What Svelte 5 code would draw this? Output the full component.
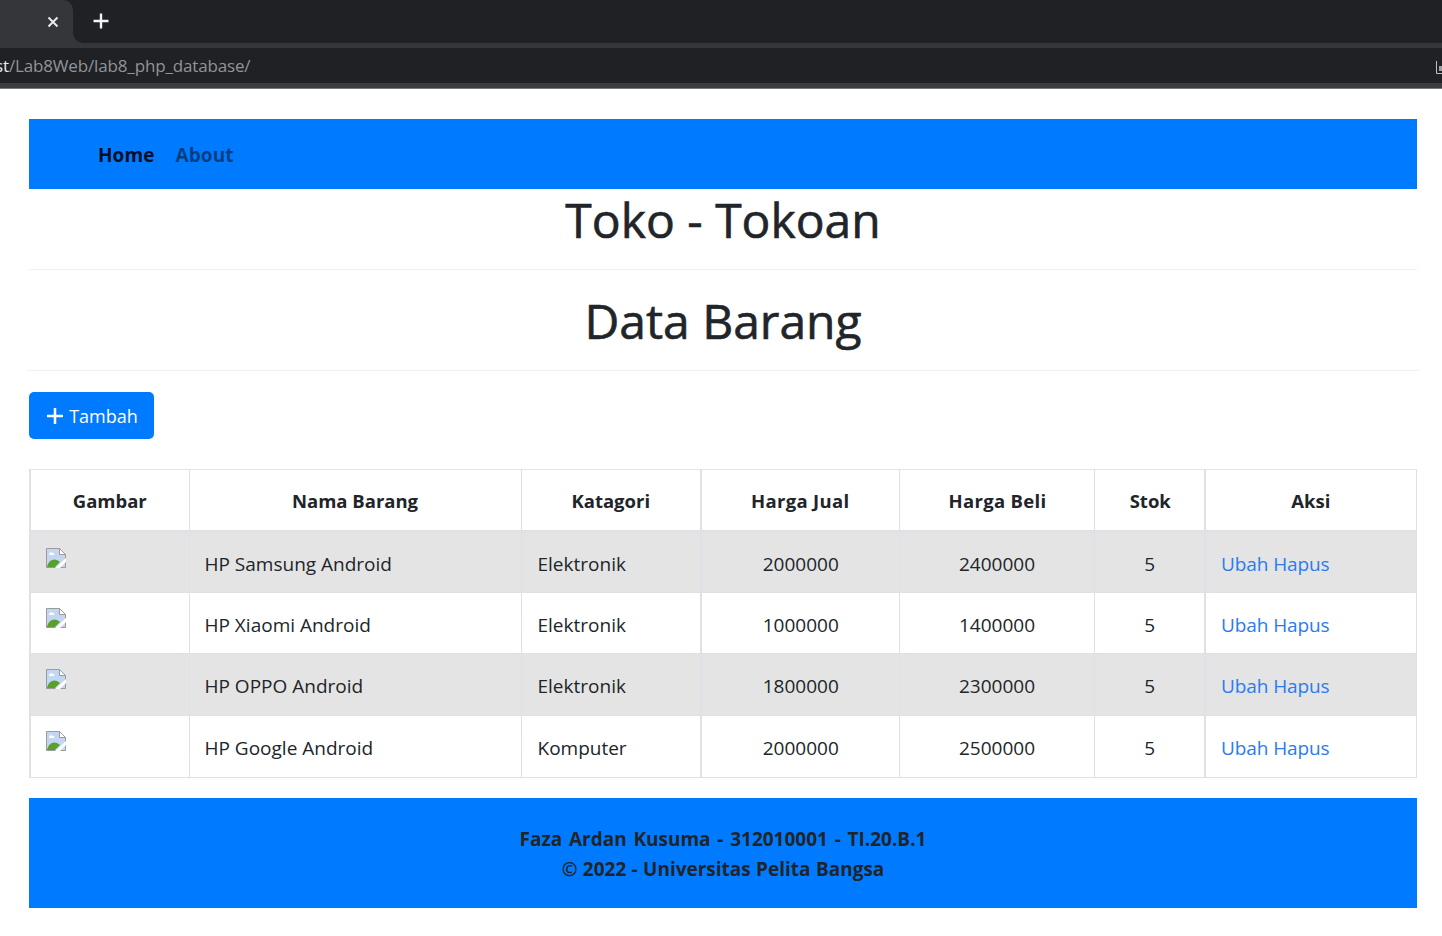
<script>
  const rows = [
    { name: 'HP Samsung Android', cat: 'Elektronik', jual: 2000000, beli: 2400000, stok: 5 },
    { name: 'HP Xiaomi Android', cat: 'Elektronik', jual: 1000000, beli: 1400000, stok: 5 },
    { name: 'HP OPPO Android', cat: 'Elektronik', jual: 1800000, beli: 2300000, stok: 5 },
    { name: 'HP Google Android', cat: 'Komputer', jual: 2000000, beli: 2500000, stok: 5 }
  ];
</script>

<div class="chrome">
  <div class="tabs">
    <div class="tab">
      <svg class="x" width="12" height="12" viewBox="0 0 12 12"><path d="M1.500 1.500l9 9M10.500 1.500l-9 9" stroke="#e8eaed" stroke-width="2" /></svg>
    </div>
    <svg class="plus" width="16" height="16" viewBox="0 0 16 16"><path d="M8 .5v15M.5 8h15" stroke="#f1f3f4" stroke-width="2.400" /></svg>
  </div>
  <div class="urlbar">
    <span class="url"><b>st</b>/Lab8Web/lab8_php_database/</span>
    <svg class="corner" width="6" height="13" viewBox="0 0 6 13"><path d="M.5 0v12.500H6" fill="none" stroke="#bdc1c6" /><path d="M3 5h3v5H3z" fill="#9aa0a6" /></svg>
  </div>
</div>

<div class="page">
  <nav class="navbar">
    <a class="active" href="#home">Home</a>
    <a href="#about">About</a>
  </nav>

  <h1>Toko - Tokoan</h1>
  <hr />
  <h1>Data Barang</h1>
  <hr class="wide" />

  <button class="btn">
    <svg width="18" height="18" viewBox="0 0 18 18"><path d="M9 1v16M1 9h16" stroke="#fff" stroke-width="2.500" /></svg>
    <span>Tambah</span>
  </button>

  <table>
    <colgroup>
      <col class="c1" /><col class="c2" /><col class="c3" /><col class="c4" /><col class="c5" /><col class="c6" /><col class="c7" />
    </colgroup>
    <thead>
      <tr>
        <th>Gambar</th><th>Nama Barang</th><th>Katagori</th><th>Harga Jual</th><th>Harga Beli</th><th>Stok</th><th>Aksi</th>
      </tr>
    </thead>
    <tbody>
      {#each rows as r, i}
        <tr class:tall={i > 1} class:top={i === 0}>
          <td class="img">
            <svg width="20" height="20" viewBox="0 0 20 20">
              <path d="M.5.5h13l6 6v13H.5z" fill="#c3d6f2" stroke="#9b9b9b" />
              <path d="M13.500.5v6h6z" fill="#fff" stroke="#9b9b9b" />
              <path d="M1 19c1-6 6-9 10-7l3 2-5 5z" fill="#5aa02c" />
              <path d="M3 6c1-2 3-2 4-1 2 0 2 2 0 2H4C3 7 3 6.500 3 6z" fill="#fff" />
              <path d="M9 20l11-10v4l-6 6z" fill="#fff" />
            </svg>
          </td>
          <td>{r.name}</td>
          <td class="cat">{r.cat}</td>
          <td class="c">{r.jual}</td>
          <td class="c">{r.beli}</td>
          <td class="c">{r.stok}</td>
          <td class="act"><a href="#ubah">Ubah</a> <a href="#hapus">Hapus</a></td>
        </tr>
      {/each}
    </tbody>
  </table>

  <footer>
    <p class="l1">Faza Ardan Kusuma - 312010001 - TI.20.B.1</p>
    <p class="l2">© 2022 - Universitas Pelita Bangsa</p>
  </footer>
</div>

<style>
  :global(body) {
    margin: 0;
    background: #fff;
    font-family: "Open Sans", "Noto Sans", sans-serif;
    color: #212529;
    font-size: 19px;
    line-height: 30px;
  }
  .chrome { height: 89px; background: #202124; border-bottom: 1px solid #77787a; box-sizing: border-box; }
  .tabs { height: 48px; box-sizing: border-box; display: flex; align-items: flex-start; border-bottom: 5px solid #35363a; }
  .tab { width: 73px; height: 43px; background: #35363a; border-top-right-radius: 10px; display: flex; align-items: center; justify-content: flex-end; padding-right: 14px; box-sizing: border-box; position: relative; }
  .tab::after { content: ""; position: absolute; left: 100%; bottom: 0; width: 10px; height: 10px; background: radial-gradient(circle at 100% 0, transparent 9.500px, #35363a 10px); }
  .plus { margin-left: 20px; margin-top: 13px; }
  .urlbar { height: 40px; box-sizing: border-box; border-bottom: 5px solid #3b3c40; position: relative; overflow: hidden; }
  .url { display: block; margin-left: -5px; font-size: 17px; letter-spacing: -.15px; line-height: 35px; color: #8f959a; white-space: nowrap; }
  .url b { color: #e8eaed; font-weight: 400; }
  .corner { position: absolute; right: 0; top: 13px; }

  .page { padding: 30px 25px 28px 29px; }
  .navbar { height: 70px; background: #007bff; display: flex; align-items: center; gap: 21px; padding: 2px 0 0 69px; box-sizing: border-box; font-weight: 700; letter-spacing: .08px; }
  .navbar a { color: rgba(0, 0, 0, .5); text-decoration: none; }
  .navbar a.active { color: rgba(0, 0, 0, .9); }

  h1 { margin: 0; text-align: center; font-size: 48px; font-weight: 400; -webkit-text-stroke: .6px #212529; line-height: 60px; padding-top: 1px; height: 61px; box-sizing: border-box; }
  hr { border: 0; border-top: 1px solid rgba(0, 0, 0, .05); margin: 19px 0 20px; }
  hr.wide { margin: 19px -3px 21px; }

  .btn { height: 47px; width: 125px; background: #007bff; color: #fff; border: 0; border-radius: 5px; font: inherit; display: flex; align-items: center; justify-content: center; gap: 5px; padding: 0 0 0 1px; }
  .btn span { font-size: 18px; }
  table { margin-top: 30px; width: 1386px; table-layout: fixed; border-collapse: collapse; }
  .c1 { width: 159px; } .c2 { width: 332px; } .c3 { width: 180px; } .c4 { width: 198px; } .c5 { width: 195px; } .c6 { width: 111px; } .c7 { width: 211px; }
  th, td { border: 1px solid #dee2e6; vertical-align: top; text-align: left; white-space: nowrap; }
  th { padding: 16px 15px 14px; }
  th:first-child, td:first-child, th:nth-child(4), td:nth-child(4), th:nth-child(7), td:nth-child(7) { border-left-width: 2px; }
  th { text-align: center; font-weight: 700; font-size: 18.500px; border-top-color: #e4e4e4; border-bottom-width: 3px; height: 30px; }
  th:nth-child(4), th:nth-child(5) { letter-spacing: .3px; }
  th:nth-child(5), th:nth-child(6) { padding-left: 17px; }
  td { height: 31px; vertical-align: middle; padding: 16px 15px 13px; }
  tr.tall td { height: 32px; }
  tr.top td { height: 30px; }
  td.c { text-align: center; padding-left: 16px; }
  td.cat { padding-left: 16px; }
  td.act { letter-spacing: -.1px; }
  td.img { vertical-align: top; padding-top: 15px; }
  td.img svg { display: block; }
  tbody tr:nth-child(odd) { background: #e4e4e4; }
  a { color: #2b7bf0; text-decoration: none; }

  footer { margin-top: 20px; height: 110px; background: #007bff; text-align: center; font-weight: 700; padding-top: 26px; box-sizing: border-box; }
  footer p { margin: 0; }
  .l1 { word-spacing: 1.800px; }
  .l2 { word-spacing: .4px; }
</style>
